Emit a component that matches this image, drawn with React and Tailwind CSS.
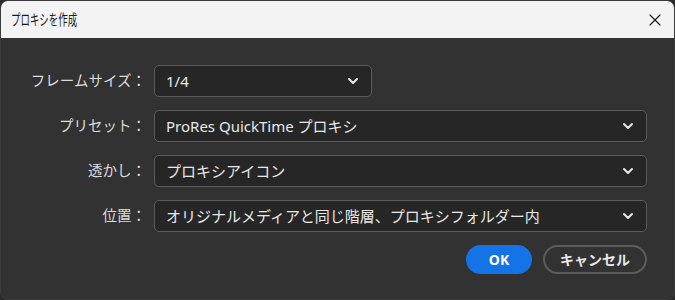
import React from 'react'
import { ChevronDown, X } from 'lucide-react'

const jp = { fontFamily: '"Noto Sans", "Noto Sans CJK JP", sans-serif' }

function Select({ value, className }) {
  return (
    <div
      className={`h-[32px] flex items-center justify-between pl-[11px] pr-[10px] bg-[#262626] border border-[#5c5c5c] rounded-[5px] text-[15px] text-[#e8e8e8] ${className}`}
    >
      <span className="leading-none">{value}</span>
      <ChevronDown className="w-[16px] h-[16px] text-[#e8e8e8]" strokeWidth={3} />
    </div>
  )
}

const rows = [
  { label: 'フレームサイズ：', value: '1/4', short: true },
  { label: 'プリセット：', value: 'ProRes QuickTime プロキシ' },
  { label: '透かし：', value: 'プロキシアイコン' },
  { label: '位置：', value: 'オリジナルメディアと同じ階層、プロキシフォルダー内' }
]

function App() {
  return (
    <div className="w-[675px] h-[300px] bg-[#2a2a2a]" style={jp}>
      <div className="w-full h-full flex flex-col rounded-[8px] overflow-hidden border border-[#3c3c3c] bg-[#323232]">
        <div className="h-[37px] shrink-0 bg-[#f3f3f3] flex items-center justify-between pl-[10px] pr-[9px]">
          <span className="inline-block text-[15px] text-[#1a1a1a] scale-x-[0.63] origin-left whitespace-nowrap">
            プロキシを作成
          </span>
          <X className="w-[20px] h-[20px] text-[#1a1a1a]" strokeWidth={1.4} />
        </div>
        <div className="flex flex-col pt-[27px] pr-[27px] gap-[13px]">
          {rows.map((r) => (
            <div key={r.label} className="flex items-center">
              <div className="w-[145px] shrink-0 text-right text-[14.5px] text-[#dcdcdc] whitespace-nowrap">{r.label}</div>
              <Select
                value={r.value}
                className={r.short ? 'ml-[8px] w-[218px]' : 'ml-[8px] flex-1'}
              />
            </div>
          ))}
          <div className="flex justify-end gap-[11px]">
            <button className="h-[29px] w-[66px] rounded-full bg-[#1473e6] text-white font-bold text-[14px]">
              OK
            </button>
            <button className="h-[29px] w-[104px] rounded-full border-2 border-[#5c5c5c] text-[#e8e8e8] font-bold text-[14px]">
              キャンセル
            </button>
          </div>
        </div>
      </div>
    </div>
  )
}

export default App
